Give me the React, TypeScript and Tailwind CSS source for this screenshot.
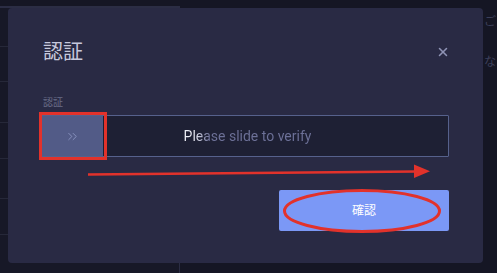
import React from "react";
import { ChevronsRight, X } from "lucide-react";

const font = { fontFamily: 'Roboto, "Noto Sans CJK JP", "Noto Sans", sans-serif' };

export default function App() {
  return (
    <div
      className="relative w-[497px] h-[273px] overflow-hidden bg-[#151624]"
      style={font}
    >
      {/* background page */}
      <div className="flex flex-col h-full">
        <div className="h-[6px]" />
        <div className="flex flex-1">
          <div className="w-[180px] flex flex-col border-t-2 border-r border-[#2b2d44] bg-[#171827]">
            <div className="h-[39px] border-b border-[#262839]" />
            <div className="h-[35px] border-b border-[#262839]" />
            <div className="h-[41px] border-b border-[#262839]" />
            <div className="h-[36px] border-b border-[#262839]" />
            <div className="h-[40px] border-b border-[#262839]" />
            <div className="h-[36px] border-b border-[#262839]" />
            <div className="flex-1" />
          </div>
          <div className="flex-1 flex flex-col items-end pr-[1px] pt-[8px] text-[12px] leading-[16px] text-[#3c3f5a] whitespace-nowrap">
            <div>ご</div>
            <div className="mt-[24px]">、な</div>
          </div>
        </div>
      </div>

      {/* modal */}
      <div className="absolute left-[8px] top-[8px] w-[475px] h-[255px] rounded-[4px] bg-[#292a44] flex flex-col pt-[30px] pl-[32px] pr-[34px] pb-[32px]">
        <div className="flex items-center justify-between h-[28px]">
          <div className="ml-[3px] text-[20px] leading-[28px] text-[#c6c8dc]">認証</div>
          <X className="w-[14px] h-[14px] text-[#8e93b5] mr-[-1px]" strokeWidth={2.6} />
        </div>
        <div className="mt-[30px] ml-[3px] text-[10px] leading-[14px] text-[#6a6d88]">認証</div>
        <div className="relative mt-[5px] h-[42px] flex border border-[#56618c] bg-[#1e2034] rounded-[1px]">
          <div className="w-[62px] h-full bg-[#525b87] flex items-center justify-center">
            <ChevronsRight className="w-[15px] h-[15px] text-[#939cc9]" strokeWidth={1.3} />
          </div>
          <div className="flex-1 flex items-center justify-center">
            <span
              className="text-[14px] bg-clip-text text-transparent mr-[56px]"
              style={{
                backgroundImage:
                  "linear-gradient(90deg, #f0f1f8 0%, #e6e7f2 9%, #6d7198 20%, #6d7198 100%)",
              }}
            >
              Please slide to verify
            </span>
          </div>
          <div className="absolute left-[-2px] top-[-4px] w-[68px] h-[48px] border-[3px] border-[#e2322b]" />
        </div>
        <div className="mt-[33px] flex justify-end">
          <button className="w-[170px] h-[41px] rounded-[2px] bg-[#7b98f6] text-white text-[12px] flex items-center justify-center">
            確認
          </button>
        </div>
      </div>

      {/* red annotations */}
      <svg
        className="absolute left-0 top-0 pointer-events-none"
        width="497"
        height="273"
        viewBox="0 0 497 273"
      >
        <line x1="88" y1="174.5" x2="416" y2="171.5" stroke="#e2322b" strokeWidth="2.6" />
        <polygon points="414,164.5 430,171.3 414,178" fill="#e2322b" />
        <ellipse cx="362" cy="211" rx="77.5" ry="20.5" fill="none" stroke="#e2322b" strokeWidth="3" />
      </svg>
    </div>
  );
}
